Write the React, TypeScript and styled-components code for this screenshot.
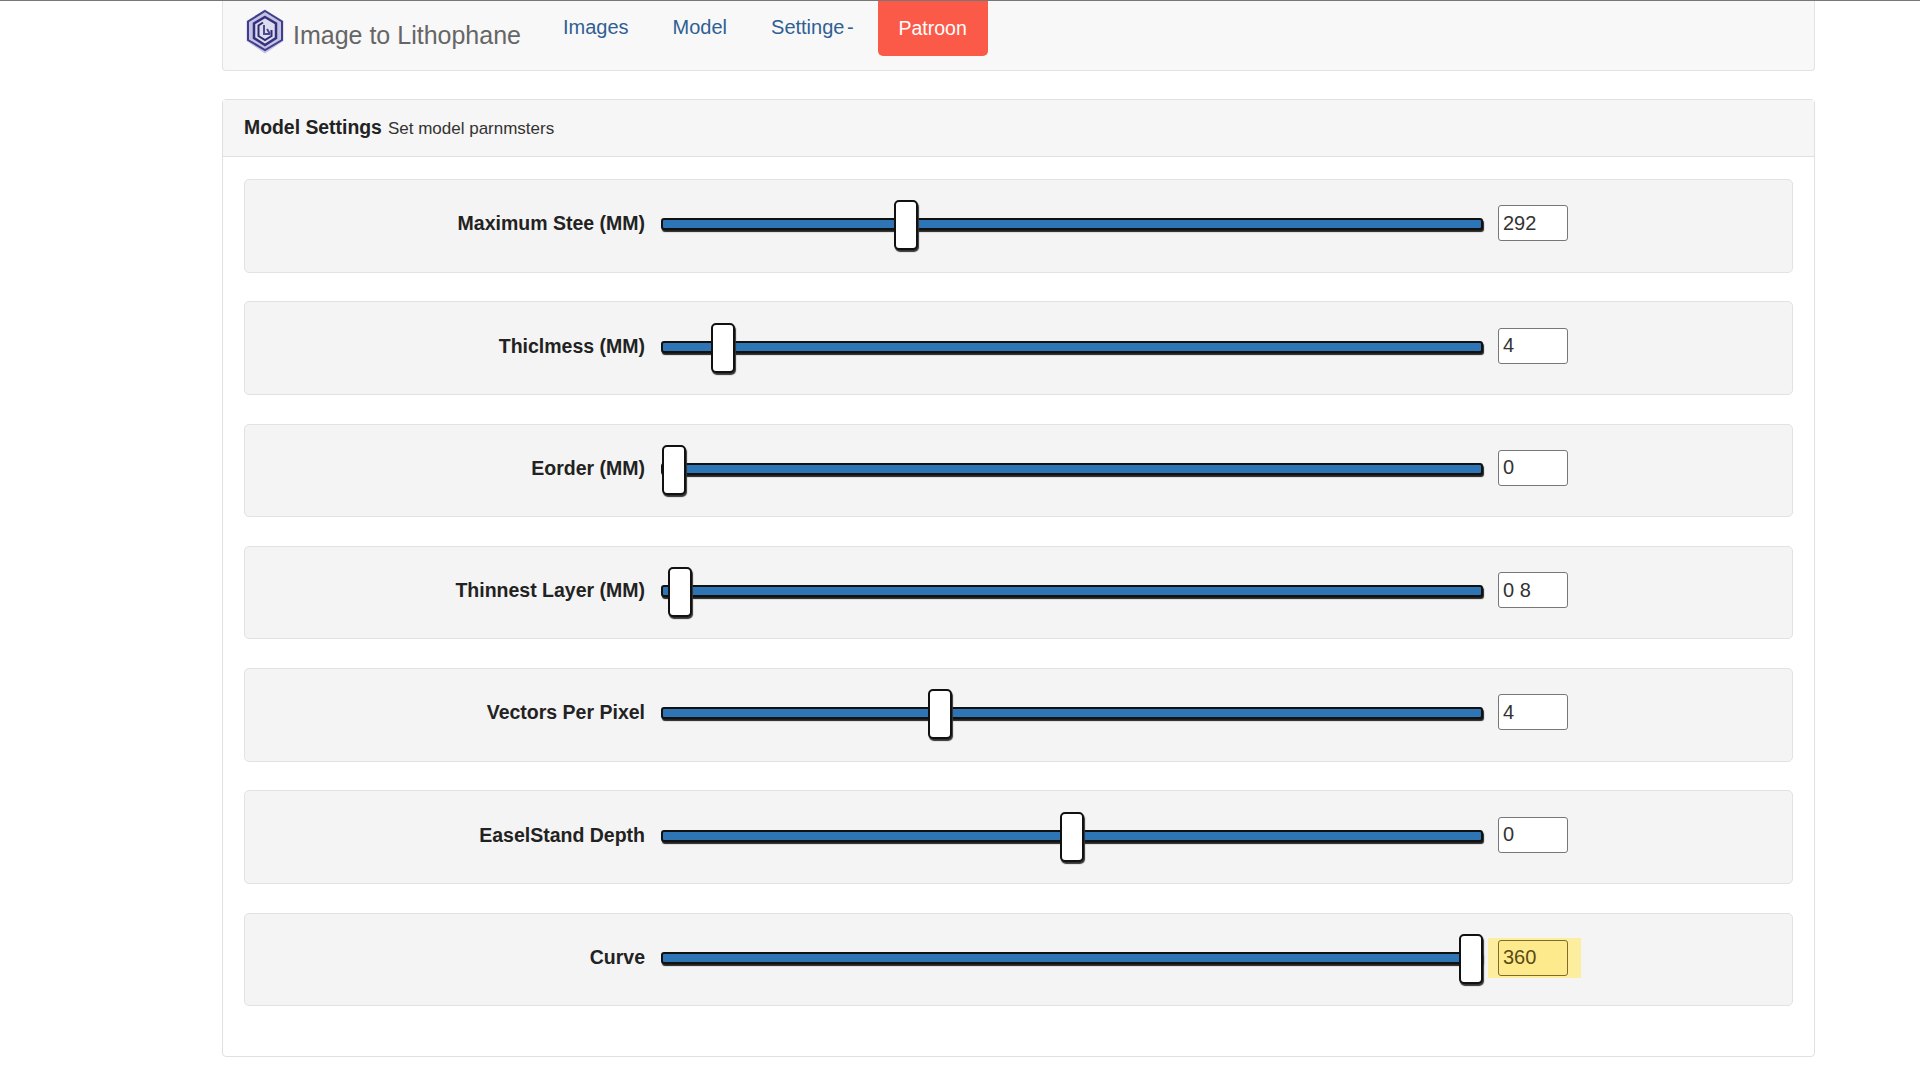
import styled, { createGlobalStyle } from "styled-components";

const GlobalStyle = createGlobalStyle`
  html, body {
    margin: 0;
    padding: 0;
    background: #fff;
  }
  body {
    font-family: "Liberation Sans", Arial, sans-serif;
    color: #222;
  }
`;

const Page = styled.div`
  height: 1079px;
  overflow: hidden;
  box-sizing: border-box;
  border-top: 1px solid #777;
`;

const Container = styled.div`
  width: 1593px;
  margin-left: 222px;
`;

const Navbar = styled.nav`
  display: flex;
  align-items: flex-start;
  box-sizing: border-box;
  height: 70px;
  background: #f8f8f8;
  border: 1px solid #e3e3e3;
  border-top: none;
  border-radius: 0 0 4px 4px;
`;

const Brand = styled.a`
  display: flex;
  align-items: flex-start;
  gap: 9px;
  margin: 8px 0 0 23px;
  font-size: 25px;
  line-height: 44px;
  color: #666;
`;

const BrandName = styled.span`
  margin-top: 4px;
`;

const NavLink = styled.a`
  margin-left: ${(p) => p.$gap}px;
  font-size: 20px;
  line-height: 52px;
  word-spacing: -3px;
  color: #2f5f94;
`;

const PatronButton = styled.a`
  margin-left: 24px;
  width: 110px;
  height: 55px;
  border-radius: 0 0 5px 5px;
  background: #fb5a49;
  color: #fff;
  font-size: 19.5px;
  line-height: 54px;
  text-align: center;
`;

const Panel = styled.section`
  margin-top: 28px;
  height: 958px;
  box-sizing: border-box;
  border: 1px solid #e0e0e0;
  border-radius: 4px;
`;

const PanelHeading = styled.header`
  display: flex;
  align-items: baseline;
  gap: 6px;
  box-sizing: border-box;
  height: 57px;
  padding: 16px 21px 0;
  background: #f6f6f6;
  border-bottom: 1px solid #e0e0e0;
`;

const PanelTitle = styled.h3`
  margin: 0;
  font-size: 19.4px;
  font-weight: 700;
  color: #222;
`;

const PanelHint = styled.small`
  font-size: 17px;
  color: #333;
`;

const PanelBody = styled.div`
  display: flex;
  flex-direction: column;
  gap: 28.8px;
  padding: 22px 21px 0 21px;
`;

const Well = styled.div`
  display: flex;
  align-items: center;
  box-sizing: border-box;
  height: 93.5px;
  padding-bottom: 4px;
  background: #f4f4f4;
  border: 1px solid #e2e2e2;
  border-radius: 5px;
`;

const Label = styled.label`
  width: 400px;
  margin-right: 16px;
  text-align: right;
  font-size: 19.5px;
  font-weight: 700;
  color: #222;
`;

const Track = styled.div`
  position: relative;
  box-sizing: border-box;
  width: 822px;
  height: 12px;
  margin-top: 1px;
  background: #2e75b6;
  border: 2px solid #111;
  border-radius: 3px;
  box-shadow: 1px 2px 1px #222;
`;

const Handle = styled.span`
  position: absolute;
  top: -20px;
  box-sizing: border-box;
  width: 24px;
  height: 50px;
  margin-left: -12px;
  background: #fff;
  border: 2px solid #111;
  border-radius: 5px;
  box-shadow: 1px 2px 1px #333;
`;

const ValueCell = styled.div`
  margin-left: 15px;
  margin-bottom: 1px;
  ${(p) =>
    p.$changed &&
    `
    margin: 0 -13px 0 5px;
    padding: 2px 13px 2px 10px;
    background: #fdee9f;
  `}
`;

const ValueInput = styled.input`
  display: block;
  box-sizing: border-box;
  width: 70px;
  height: 36px;
  padding: 0 4px;
  font-family: "Liberation Sans", Arial, sans-serif;
  font-size: 20px;
  color: ${(p) => (p.$changed ? "#5a4a14" : "#333")};
  background: ${(p) => (p.$changed ? "#fdea8c" : "#fff")};
  border: 1px solid ${(p) => (p.$changed ? "#7d6c2a" : "#777")};
  border-radius: 3px;
  outline: none;
`;

const Logo = () => (
  <svg width="38" height="45" viewBox="0 0 38 45" style={{ flex: "none" }}>
    <polygon points="19,0.5 37.5,12 37.5,32 19,44.5 0.5,32 0.5,12" fill="#c5c3e2" />
    <polygon points="19,2 36,12.5 36,31 19,41 2,31 2,12.5" fill="none" stroke="#3f3d8c" strokeWidth="2" />
    <polygon points="19,8 30,14.5 30,29 19,36 8,29 8,14.5" fill="#dcdcee" stroke="#34327e" strokeWidth="2.5" />
    <path d="M17 13.5 L12.5 16.5 V27 L19 31 L25.5 27 V21" fill="none" stroke="#2f2d75" strokeWidth="2" />
    <path d="M18 16 V25 H24 M21 20 L24 25" fill="none" stroke="#4a4890" strokeWidth="2" />
  </svg>
);

const sliders = [
  { label: "Maximum Stee (MM)", value: "292", at: 906 },
  { label: "Thiclmess (MM)", value: "4", at: 723 },
  { label: "Eorder (MM)", value: "0", at: 674 },
  { label: "Thinnest Layer (MM)", value: "0 8", at: 680 },
  { label: "Vectors Per Pixel", value: "4", at: 940 },
  { label: "EaselStand Depth", value: "0", at: 1072 },
  { label: "Curve", value: "360", at: 1471, changed: true },
];

const TRACK_LEFT = 663;

export default function App() {
  return (
    <Page>
      <GlobalStyle />
      <Container>
        <Navbar>
          <Brand>
            <Logo />
            <BrandName>Image to Lithophane</BrandName>
          </Brand>
          <NavLink $gap={42}>Images</NavLink>
          <NavLink $gap={44}>Model</NavLink>
          <NavLink $gap={44}>Settinge -</NavLink>
          <PatronButton>Patroon</PatronButton>
        </Navbar>
        <Panel>
          <PanelHeading>
            <PanelTitle>Model Settings</PanelTitle>
            <PanelHint>Set model parnmsters</PanelHint>
          </PanelHeading>
          <PanelBody>
            {sliders.map((s) => (
              <Well key={s.label}>
                <Label>{s.label}</Label>
                <Track>
                  <Handle style={{ left: s.at - TRACK_LEFT }} />
                </Track>
                <ValueCell $changed={s.changed}>
                  <ValueInput readOnly value={s.value} $changed={s.changed} />
                </ValueCell>
              </Well>
            ))}
          </PanelBody>
        </Panel>
      </Container>
    </Page>
  );
}
